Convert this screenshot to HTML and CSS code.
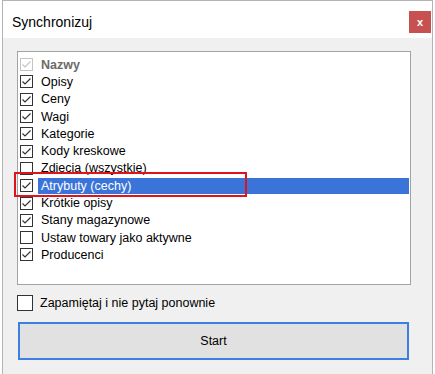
FILE: index.html
```html
<!DOCTYPE html>
<html lang="pl">
<head>
    <meta charset="UTF-8">
    <title>Synchronizuj</title>
    <link rel="stylesheet" href="styles.css">
</head>
<body>
    <div class="window">
        <div class="titlebar">
            <span class="title">Synchronizuj</span>
            <button class="close">x</button>
        </div>
        <div class="content">
            <ul class="list">
                <li class="item disabled"><span class="box checked"></span><span class="label">Nazwy</span></li>
                <li class="item"><span class="box checked"></span><span class="label">Opisy</span></li>
                <li class="item"><span class="box checked"></span><span class="label">Ceny</span></li>
                <li class="item"><span class="box checked"></span><span class="label">Wagi</span></li>
                <li class="item"><span class="box checked"></span><span class="label">Kategorie</span></li>
                <li class="item"><span class="box checked"></span><span class="label">Kody kreskowe</span></li>
                <li class="item"><span class="box"></span><span class="label">Zdiecia (wszystkie)</span></li>
                <li class="item selected"><span class="box checked"></span><span class="label">Atrybuty (cechy)</span><span class="marker"></span></li>
                <li class="item"><span class="box checked"></span><span class="label">Krótkie opisy</span></li>
                <li class="item"><span class="box checked"></span><span class="label">Stany magazynowe</span></li>
                <li class="item"><span class="box"></span><span class="label">Ustaw towary jako aktywne</span></li>
                <li class="item"><span class="box checked"></span><span class="label">Producenci</span></li>
            </ul>
            <label class="remember"><span class="box big"></span>Zapamiętaj i nie pytaj ponownie</label>
            <button class="start">Start</button>
        </div>
    </div>
</body>
</html>
```

FILE: styles.css
```css
/* dialog window */
body {
    margin: 0;
    background: #fff;
    font-family: "Liberation Sans", Arial, sans-serif;
}
.window {
    margin-left: 2px;
    width: 429px;
    height: 373px;
    border: 1px solid #b4b4b4;
    border-bottom: none;
    background: #f0f0f0;
}
.titlebar {
    height: 37px;
    background: #fff;
    display: flex;
    justify-content: space-between;
    align-items: flex-start;
}
.title {
    font-size: 14px;
    color: #000;
    margin: 13px 0 0 9px;
}
.close {
    width: 22px;
    height: 22px;
    margin: 10px 1px 0 0;
    padding: 0;
    border: none;
    background: #c75050;
    color: #fff;
    font-family: "Liberation Sans", Arial, sans-serif;
    font-weight: bold;
    font-size: 11px;
    line-height: 20px;
}
.content {
    padding: 13px 0 0 14px;
}
.list {
    list-style: none;
    margin: 0;
    padding: 4px 0 0 2px;
    width: 390px;
    height: 228px;
    border: 1px solid #a3a3a3;
    background: #fff;
    box-sizing: content-box;
}
.item {
    position: relative;
    height: 17.3px;
    display: flex;
    align-items: center;
    font-size: 12.5px;
    color: #000;
}
.box {
    width: 11px;
    height: 11px;
    border: 1px solid #333;
    background: #fff no-repeat center;
    flex: none;
}
.box.checked {
    background-image: url("data:image/svg+xml;utf8,<svg xmlns='http://www.w3.org/2000/svg' width='11' height='11'><polyline points='1.5,5.5 4,8 9.5,2.5' fill='none' stroke='%23333' stroke-width='1.2'/></svg>");
}
.label {
    flex: 1;
    margin: 0 1px 0 5px;
    padding-left: 3px;
    height: 16px;
    line-height: 16px;
}
.disabled .box {
    border-color: #c4c4c4;
    background-image: url("data:image/svg+xml;utf8,<svg xmlns='http://www.w3.org/2000/svg' width='11' height='11'><polyline points='1.5,5.5 4,8 9.5,2.5' fill='none' stroke='%23c4c4c4' stroke-width='1.2'/></svg>");
}
.disabled .label {
    color: #6b6b6b;
    font-weight: bold;
}
.selected .label {
    background: #3b74d9;
    color: #fff;
}
/* red annotation frame */
.marker {
    position: absolute;
    left: -6px;
    top: -5px;
    width: 229px;
    height: 21px;
    border: 2px solid #e0121c;
}
.remember {
    display: flex;
    align-items: center;
    margin-top: 10px;
    font-size: 12.5px;
    color: #000;
}
.box.big {
    width: 14px;
    height: 14px;
    margin-right: 7px;
}
.start {
    display: block;
    margin: 11px 0 0 1px;
    width: 391px;
    height: 38px;
    border: 2px solid #3d7ee3;
    background: #e1e1e1;
    font-family: "Liberation Sans", Arial, sans-serif;
    font-size: 12.5px;
    color: #000;
}
```
